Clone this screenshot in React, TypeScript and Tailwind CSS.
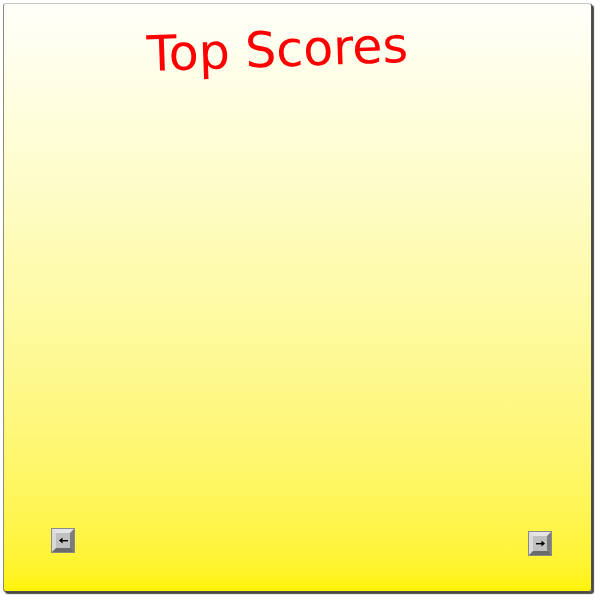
import React from 'react'

function ArrowKey({ dir }: { dir: 'left' | 'right' }) {
  return (
    <button
      className="w-[22px] h-[23px] flex items-center justify-center bg-[#c0c0c0] border-[4px] border-t-[#e4e4e4] border-l-[#dadada] border-r-[#7c7c7c] border-b-[#6a6a6a] outline outline-1 outline-[#8a8a8a]"
    >
      <svg width="9" height="7" viewBox="0 0 9 7">
        {dir === 'left' ? (
          <>
            <path d="M0 3.5 L3.5 0.5 L3.5 6.5 Z" fill="#000" />
            <rect x="3" y="3" width="6" height="1.4" fill="#000" />
          </>
        ) : (
          <>
            <path d="M9 3.5 L5.5 0.5 L5.5 6.5 Z" fill="#000" />
            <rect x="0" y="3" width="6" height="1.4" fill="#000" />
          </>
        )}
      </svg>
    </button>
  )
}

export default function App() {
  return (
    <div className="w-[600px] h-[600px] bg-white p-[3px]">
      <div
        className="w-[589px] h-[589px] rounded-[3px] border border-t-[#c8c8c0] border-l-[#8c8c7c] border-r-[#505050] border-b-[#505050] shadow-[2px_2px_1px_#4a4a40] bg-gradient-to-b from-[#fffffa] to-[#fff300] flex flex-col"
      >
        <div className="pl-[143px] pt-[26px]">
          <h1
            className="text-[49px] leading-none text-[#ff0000] origin-left -rotate-[2deg] inline-block"
            style={{ fontFamily: '"DejaVu Sans", Verdana, sans-serif' }}
          >
            Top Scores
          </h1>
        </div>
        <div className="mt-auto mb-[36px] flex justify-between items-start pl-[48px] pr-[40px]">
          <ArrowKey dir="left" />
          <div className="mt-[3px]">
            <ArrowKey dir="right" />
          </div>
        </div>
      </div>
    </div>
  )
}
